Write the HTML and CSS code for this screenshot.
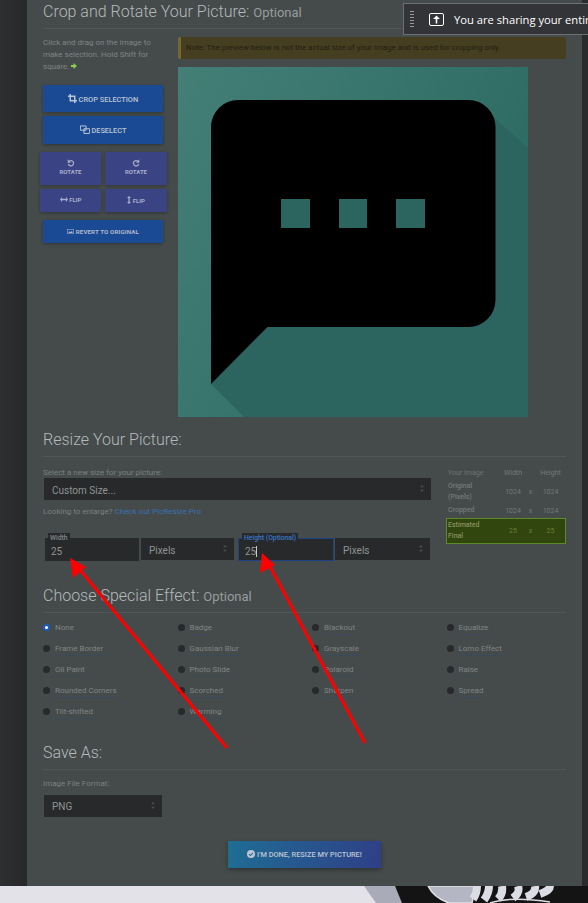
FILE: index.html
```html
<!DOCTYPE html>
<html lang="en">
<head>
<meta charset="utf-8">
<title>PicResize</title>
<link rel="stylesheet" href="styles.css">
</head>
<body>
<div class="desktop">
  <div class="window">
    <div class="rail"></div>
    <main class="panel">
      <h2 class="heading">Crop and Rotate Your Picture: <small>Optional</small></h2>
      <section class="crop">
        <aside class="tools">
          <p class="hint">Click and drag on the image to make selection. Hold Shift for square. <svg class="hint-arrow" viewBox="0 0 6 6"><path d="M0 2h2.500V0L6 3 2.500 6V4H0z"/></svg></p>
          <button class="btn btn-crop"><svg class="ico" viewBox="0 0 12 12"><path d="M3 0v9h9M0 3h9v9" fill="none" stroke="currentColor" stroke-width="2"/></svg> CROP SELECTION</button>
          <button class="btn btn-deselect"><svg class="ico" viewBox="0 0 14 12"><path d="M.5 1h8v6h-8zM5.500 5h8v6.500h-8z" fill="none" stroke="currentColor" stroke-width="1.400"/></svg> DESELECT</button>
          <div class="tool-grid">
            <button class="btn btn-alt btn-rotate"><svg class="ico ico-rot" viewBox="0 0 12 12"><path d="M3 3.500A4 4 0 1 1 2 7.500" fill="none" stroke="currentColor" stroke-width="1.800"/><path d="M1 .5v5h5z" fill="currentColor"/></svg><span>ROTATE</span></button>
            <button class="btn btn-alt btn-rotate"><svg class="ico ico-rot" viewBox="0 0 12 12"><path d="M9 3.500A4 4 0 1 0 10 7.500" fill="none" stroke="currentColor" stroke-width="1.800"/><path d="M11 .5v5H6z" fill="currentColor"/></svg><span>ROTATE</span></button>
            <button class="btn btn-alt btn-flip"><svg class="ico-flip-h" viewBox="0 0 10 6"><path d="M0 3l2.500-3v2h5V0L10 3 7.500 6V4h-5v2z" fill="currentColor"/></svg> FLIP</button>
            <button class="btn btn-alt btn-flip"><svg class="ico-flip-v" viewBox="0 0 5 10"><path d="M2.500 0L5 2.500H3.300v5H5L2.500 10 0 7.500h1.700v-5H0z" fill="currentColor"/></svg> FLIP</button>
          </div>
          <button class="btn btn-revert"><svg class="ico-img" viewBox="0 0 12 9"><path d="M0 0h12v9H0zM1 1v7h10V1z" fill="currentColor" fill-rule="evenodd"/><path d="M2 7l2.500-3 2 2 2-3L10 7z" fill="currentColor"/></svg> REVERT TO ORIGINAL</button>
        </aside>
        <div class="stage">
          <div class="note">Note: The preview below is not the actual size of your image and is used for cropping only.</div>
          <svg class="preview" viewBox="0 0 350 350" role="img" aria-label="Speech bubble image">
            <defs>
              <linearGradient id="bg" x1="0" y1="0" x2="1" y2=".5">
                <stop offset="0" stop-color="#447f76"/>
                <stop offset="1" stop-color="#2b6a62"/>
              </linearGradient>
            </defs>
            <rect width="350" height="350" fill="url(#bg)"/>
            <path d="M80 45H310L350 81V350H66L33 317V100Z" fill="#2c655f"/>
            <path fill-rule="evenodd" fill="#000" d="M33 60a27 27 0 0 1 27-27H290.500a27 27 0 0 1 27 27V233a27 27 0 0 1-27 27H89.500L33 317ZM103 132v29h29v-29ZM161 132v29h28v-29ZM218 132v29h29v-29Z"/>
          </svg>
        </div>
      </section>

      <h2 class="heading heading-resize">Resize Your Picture:</h2>
      <section class="resize">
        <div class="resize-form">
          <label class="field-label">Select a new size for your picture:</label>
          <div class="select select-size">Custom Size...<svg class="updown" viewBox="0 0 5 9"><path d="M2.500 0L5 3H0zM2.500 9L0 6h5z"/></svg></div>
          <p class="enlarge">Looking to enlarge? <a href="#">Check out PicResize Pro</a></p>
          <div class="dims">
            <div class="input input-w"><span class="float-label">Width</span>25</div>
            <div class="select select-unit">Pixels<svg class="updown" viewBox="0 0 5 9"><path d="M2.500 0L5 3H0zM2.500 9L0 6h5z"/></svg></div>
            <div class="input input-h"><span class="float-label float-active">Height (Optional)</span>25<i class="caret"></i></div>
            <div class="select select-unit select-unit-2">Pixels<svg class="updown" viewBox="0 0 5 9"><path d="M2.500 0L5 3H0zM2.500 9L0 6h5z"/></svg></div>
          </div>
        </div>
        <table class="sizes">
          <tr class="head"><th>Your Image</th><td>Width</td><td></td><td>Height</td></tr>
          <tr class="row-orig"><th>Original (Pixels)</th><td>1024</td><td>x</td><td>1024</td></tr>
          <tr class="row-crop"><th>Cropped</th><td>1024</td><td>x</td><td>1024</td></tr>
          <tr class="final"><th>Estimated Final</th><td>25</td><td>x</td><td>25</td></tr>
        </table>
      </section>

      <h2 class="heading heading-effect">Choose Special Effect: <small>Optional</small></h2>
      <section class="effects">
        <div class="effect"><i class="radio radio-on"></i><span>None</span></div>
        <div class="effect"><i class="radio"></i><span>Badge</span></div>
        <div class="effect"><i class="radio"></i><span>Blackout</span></div>
        <div class="effect"><i class="radio"></i><span>Equalize</span></div>
        <div class="effect"><i class="radio"></i><span>Frame Border</span></div>
        <div class="effect"><i class="radio"></i><span>Gaussian Blur</span></div>
        <div class="effect"><i class="radio"></i><span>Grayscale</span></div>
        <div class="effect"><i class="radio"></i><span>Lomo Effect</span></div>
        <div class="effect"><i class="radio"></i><span>Oil Paint</span></div>
        <div class="effect"><i class="radio"></i><span>Photo Slide</span></div>
        <div class="effect"><i class="radio"></i><span>Polaroid</span></div>
        <div class="effect"><i class="radio"></i><span>Raise</span></div>
        <div class="effect"><i class="radio"></i><span>Rounded Corners</span></div>
        <div class="effect"><i class="radio"></i><span>Scorched</span></div>
        <div class="effect"><i class="radio"></i><span>Sharpen</span></div>
        <div class="effect"><i class="radio"></i><span>Spread</span></div>
        <div class="effect"><i class="radio"></i><span>Tilt-shifted</span></div>
        <div class="effect"><i class="radio"></i><span>Warming</span></div>
      </section>

      <h2 class="heading heading-save">Save As:</h2>
      <section class="save">
        <label class="field-label">Image File Format:</label>
        <div class="select select-format">PNG<svg class="updown" viewBox="0 0 5 9"><path d="M2.500 0L5 3H0zM2.500 9L0 6h5z"/></svg></div>
        <button class="btn-done"><svg class="ico-check" viewBox="0 0 12 12"><circle cx="6" cy="6" r="6" fill="currentColor"/><path d="M3 6.200l2.200 2.200L9 4.300" fill="none" stroke="#2a6a8c" stroke-width="1.600"/></svg> I'M DONE, RESIZE MY PICTURE!</button>
      </section>
    </main>
    <div class="rail-right"></div>
  </div>

  <div class="wallpaper">
    <svg viewBox="0 0 588 17">
      <rect width="588" height="17" fill="#e2e2e8"/>
      <path d="M364 0H395L404 17H376Z" fill="#a9abb8"/>
      <path d="M395 0H588V17H402Z" fill="#141414"/>
      <path d="M428 0C432 8 440 14 449 17H472L476 0Z" fill="#b4b6c4" stroke="#dfdfe6" stroke-width="1.500"/>
      <path d="M477 0C477 5 476 9 473 13M489 0C489 6 487 10 484 14M502 0C503 6 501 10 498 13M518 0C520 6 517 9 513 12M535 0C536 5 532 9 526 11M550 0C550 3 546 6 540 8" stroke="#dcdce4" stroke-width="8" fill="none"/>
      <path d="M490 17C505 12 525 12 550 16" stroke="#dcdce4" stroke-width="1.500" fill="none"/>
    </svg>
  </div>

  <svg class="arrows" viewBox="0 0 588 903" aria-hidden="true">
    <path d="M227 748L76 565M365 743L267 561" stroke="#f00" stroke-width="3" fill="none"/>
    <path d="M70 558L86 567 73 578Z M262 553L275 565 260 573Z" fill="#f00"/>
  </svg>

  <div class="share">
    <span class="grip"></span>
    <svg class="share-icon" viewBox="0 0 15 13"><rect x=".5" y=".5" width="14" height="12" rx="1.500" fill="none" stroke="#fff"/><path d="M7.500 2.500L11 6H8.300v4.500H6.700V6H4z" fill="#fff"/></svg>
    <span class="share-text">You are sharing your entire screen</span>
  </div>
</div>
</body>
</html>
```

FILE: styles.css
```css
* { box-sizing: border-box; }
html, body { margin: 0; padding: 0; background: #282a2c; }
body { font-family: Roboto, "Liberation Sans", sans-serif; color: #8d9292; }
.desktop { position: relative; width: 588px; height: 903px; overflow: hidden; }
.window { display: flex; height: 886px; }
.rail { width: 27px; background: linear-gradient(90deg, #2d2f31, #26282a); }
.rail-right { width: 6px; background: #2a2b2d; }
.panel { width: 555px; padding: 0 16px 18px; background: #454b4b; }

.heading { height: 29px; margin: 0; line-height: 24px; font-size: 16px; font-weight: 300; color: #b4baba; border-bottom: 1px solid #505656; }
.heading small { font-size: 13px; font-weight: 400; color: #979c9c; }
.heading-resize { margin-top: 11px; }
.heading-effect { margin-top: 23px; }
.heading-save { margin-top: 19px; }

.crop { display: flex; margin-top: 8px; }
.tools { width: 135px; }
.hint { width: 121px; margin: 0 0 12px; font-size: 8px; line-height: 12px; color: #7f8484; }
.hint-arrow { width: 6px; height: 6px; fill: #8fcf50; }
.btn { display: block; border: 0; padding: 0; color: #bcc4d2; font-family: inherit; font-weight: 500; background: #1b4a94; box-shadow: 0 1px 3px rgba(0,0,0,.3); }
.btn-crop { width: 120px; height: 27px; margin-bottom: 4px; font-size: 7.400px; }
.btn-deselect { width: 120px; height: 28px; margin-bottom: 8px; font-size: 7.400px; }
.ico { width: 9px; height: 9px; vertical-align: -1px; }
.btn-deselect .ico { width: 10px; }
.tool-grid { display: grid; grid-template-columns: 61px 62px; grid-template-rows: 33px 23px; gap: 4px; margin-left: -3px; width: 127px; }
.btn-alt { background: #3a4384; font-size: 6px; font-weight: 700; color: #a9aec8; }
.btn-flip { padding-bottom: 2px; }
.btn-rotate { display: flex; flex-direction: column; align-items: center; justify-content: center; gap: 1px; padding-bottom: 3px; }
.ico-rot { width: 8px; height: 8px; }
.ico-flip-h { width: 8px; height: 5px; }
.ico-flip-v { width: 4px; height: 8px; vertical-align: -1px; }
.btn-revert { width: 120px; height: 23px; margin-top: 8px; font-size: 6.200px; font-weight: 700; letter-spacing: .1px; color: #aeb6ca; }
.ico-img { width: 7px; height: 5px; }

.stage { width: 388px; }
.note { height: 22px; padding-left: 5px; line-height: 22px; font-size: 7.900px; color: #231f12; background: #453e20; border-left: 3px solid #75682f; border-radius: 2px; }
.preview { display: block; width: 350px; height: 350px; margin-top: 8px; }

.resize { display: flex; height: 104px; }
.resize-form { width: 388px; padding: 11px 0 0 1px; }
.field-label { display: block; height: 10px; line-height: 10px; font-size: 8px; color: #7b8080; margin-left: -1px; }
.select { position: relative; background: #27292b; color: #8f9494; font-size: 10px; }
.select-size { height: 22px; width: 387px; padding-left: 8px; line-height: 25px; }
.updown { position: absolute; right: 7px; top: 50%; width: 4px; height: 7px; margin-top: -4px; fill: #4b4f51; }
.enlarge { margin: 7px 0 0 -1px; height: 10px; line-height: 10px; font-size: 8px; color: #7b8080; }
.enlarge a { color: #3a70b4; text-decoration: none; }
.dims { display: flex; margin-top: 21px; height: 23px; }
.input { position: relative; height: 23px; background: #27292b; font-size: 10px; line-height: 27px; color: #8f9494; padding-left: 6px; }
.input-w { width: 94px; margin-left: 1px; }
.input-h { width: 96px; margin-left: 4px; padding-left: 6px; border: 1px solid #1c4388; line-height: 25px; }
.select-unit { width: 93px; height: 22px; margin-left: 2px; padding-left: 8px; line-height: 26px; }
.select-unit-2 { width: 95px; margin-left: 1px; }
.float-label { position: absolute; left: 3px; top: -5px; padding: 0 2px; height: 10px; line-height: 10px; font-size: 6.800px; font-weight: 500; background: #27292b; color: #83888a; }
.float-active { left: 3px; top: -6px; color: #3a78c8; }
.caret { display: inline-block; width: 1px; height: 11px; vertical-align: -2px; background: #c8c8c8; }

.sizes { width: 120px; height: 78px; margin: 9px 0 0 15px; border-collapse: collapse; font-size: 7px; color: #747979; table-layout: fixed; }
.sizes th { width: 54px; padding: 0 12px 0 2px; text-align: left; font-weight: 500; line-height: 11px; }
.sizes td { text-align: center; padding: 0; }
.sizes td:nth-child(2) { width: 26px; }
.sizes td:nth-child(3) { width: 9px; }
.sizes .head { height: 14px; }
.sizes .head th { font-weight: 400; color: #6e7373; }
.sizes .row-orig { height: 23px; }
.sizes .row-crop { height: 15px; }
.sizes .final { height: 26px; background: #31450f; outline: 1px solid #5c8a2a; outline-offset: -1px; color: #6e7e36; }
.sizes .final th { color: #88925c; }

.effects { display: grid; grid-template-columns: repeat(4, 134.500px); grid-auto-rows: 21px; padding: 4px 0 0; }
.effect { display: flex; align-items: center; font-size: 8px; color: #808585; }
.effect span { border-bottom: 1px dotted #324a68; margin-left: 5px; line-height: 13px; }
.radio { width: 7px; height: 7px; border-radius: 50%; background: #27292b; }
.radio-on { background: #fff; box-shadow: 0 0 0 2px #1b5cc0; width: 3px; height: 3px; margin: 0 2px; }

.save { padding-top: 9px; }
.save .field-label { margin-left: 0; }
.select-format { width: 118px; height: 22px; margin: 6px 0 0 1px; padding-left: 8px; line-height: 24px; }
.btn-done { display: block; width: 153px; height: 27px; margin: 24px auto 0; border: 0; padding: 0; color: #bcc6d4; font-family: inherit; font-size: 7.400px; font-weight: 500; background: linear-gradient(100deg, #1f6d94, #2f3f88); box-shadow: 0 2px 4px rgba(0,0,0,.35); }
.ico-check { width: 8px; height: 8px; vertical-align: -1px; }

.wallpaper { height: 17px; }
.wallpaper svg { display: block; width: 588px; height: 17px; }

.arrows { position: absolute; left: 0; top: 0; width: 588px; height: 903px; pointer-events: none; }

.share { position: absolute; left: 403px; top: 3px; display: flex; align-items: center; width: 260px; height: 32px; background: #333437; border: 1px solid #6e6f71; color: #fff; }
.grip { width: 4px; height: 16px; margin-left: 6px; background: repeating-linear-gradient(#9a9a9a 0 1px, transparent 1px 3px); }
.share-icon { width: 15px; height: 13px; margin-left: 15px; }
.share-text { margin-left: 10px; font-family: "Open Sans", "Noto Sans", sans-serif; font-size: 11.200px; white-space: nowrap; }
```
